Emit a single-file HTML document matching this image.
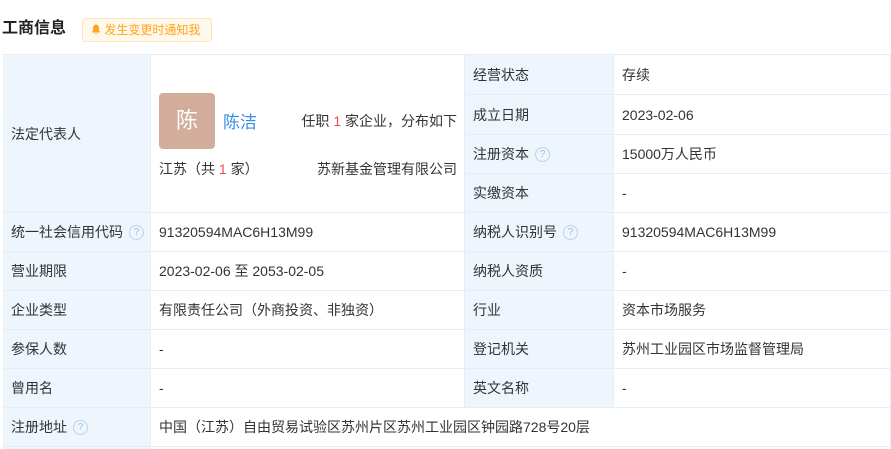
<!DOCTYPE html>
<html><head><meta charset="utf-8"><style>
*{margin:0;padding:0;box-sizing:border-box}
html,body{width:891px;height:449px;overflow:hidden}
body{background:#fff;font-family:"Liberation Sans","Noto Sans CJK SC",sans-serif;color:#333;font-size:14px;position:relative}
.c{position:absolute;border-right:1px solid #e4eef6;border-bottom:1px solid #e4eef6;display:flex;align-items:center;padding-left:8px;white-space:nowrap}
.l{background:#eef5fd;color:#333}
.q{display:inline-block;width:15px;height:15px;border:1px solid #b9d2ea;border-radius:50%;color:#9bbde0;font-size:10px;line-height:13px;text-align:center;margin-left:6px}
</style></head><body>
<div style="position:absolute;left:2px;top:18px;font-size:16px;font-weight:bold;color:#222;line-height:22px">工商信息</div>
<div style="position:absolute;left:82px;top:18px;width:130px;height:24px;background:#fff8ec;border:1px solid #ffe4b5;border-radius:3px;color:#ffa41c;font-size:12px;line-height:22px;padding-left:8px">
<svg width="10" height="11" viewBox="0 0 10 11" style="vertical-align:-1px"><path d="M5 0.5C2.8 0.5 2 2.5 2 4V6.5L0.8 8.5H9.2L8 6.5V4C8 2.5 7.2 0.5 5 0.5Z M3.8 9.3A1.2 1.2 0 0 0 6.2 9.3Z" fill="#ffa41c"/></svg> 发生变更时通知我</div>
<div style="position:absolute;left:3px;top:54px;width:888px;border-top:1px solid #e4eef6"></div>
<div style="position:absolute;left:3px;top:54px;height:395px;border-left:1px solid #e4eef6"></div>

<div class="c l" style="left:3px;top:55px;width:148px;height:158px">法定代表人</div>
<div class="c" style="left:151px;top:55px;width:314px;height:158px;display:block;padding:0">
 <div style="position:absolute;left:8px;top:38px;width:56px;height:56px;background:#d2ad9c;border-radius:4px;color:#fff;font-size:22px;line-height:56px;text-align:center">陈</div>
 <div style="position:absolute;left:72px;top:53px;font-size:17px;color:#3a8ee6">陈洁</div>
 <div style="position:absolute;right:7px;top:56px">任职 <span style="color:#f04a4a">1</span> 家企业，分布如下</div>
 <div style="position:absolute;left:8px;top:104px">江苏（共 <span style="color:#f04a4a">1</span> 家）</div>
 <div style="position:absolute;right:7px;top:104px">苏新基金管理有限公司</div>
</div>

<div class="c l" style="left:465px;top:55px;width:149px;height:40px">经营状态</div>
<div class="c" style="left:614px;top:55px;width:277px;height:40px">存续</div>
<div class="c l" style="left:465px;top:95px;width:149px;height:40px">成立日期</div>
<div class="c" style="left:614px;top:95px;width:277px;height:40px">2023-02-06</div>
<div class="c l" style="left:465px;top:135px;width:149px;height:39px">注册资本<span class="q">?</span></div>
<div class="c" style="left:614px;top:135px;width:277px;height:39px">15000万人民币</div>
<div class="c l" style="left:465px;top:174px;width:149px;height:39px">实缴资本</div>
<div class="c" style="left:614px;top:174px;width:277px;height:39px">-</div>

<div class="c l" style="left:3px;top:213px;width:148px;height:39px">统一社会信用代码<span class="q">?</span></div>
<div class="c" style="left:151px;top:213px;width:314px;height:39px">91320594MAC6H13M99</div>
<div class="c l" style="left:465px;top:213px;width:149px;height:39px">纳税人识别号<span class="q">?</span></div>
<div class="c" style="left:614px;top:213px;width:277px;height:39px">91320594MAC6H13M99</div>

<div class="c l" style="left:3px;top:252px;width:148px;height:39px">营业期限</div>
<div class="c" style="left:151px;top:252px;width:314px;height:39px">2023-02-06 至 2053-02-05</div>
<div class="c l" style="left:465px;top:252px;width:149px;height:39px">纳税人资质</div>
<div class="c" style="left:614px;top:252px;width:277px;height:39px">-</div>

<div class="c l" style="left:3px;top:291px;width:148px;height:39px">企业类型</div>
<div class="c" style="left:151px;top:291px;width:314px;height:39px">有限责任公司（外商投资、非独资）</div>
<div class="c l" style="left:465px;top:291px;width:149px;height:39px">行业</div>
<div class="c" style="left:614px;top:291px;width:277px;height:39px">资本市场服务</div>

<div class="c l" style="left:3px;top:330px;width:148px;height:39px">参保人数</div>
<div class="c" style="left:151px;top:330px;width:314px;height:39px">-</div>
<div class="c l" style="left:465px;top:330px;width:149px;height:39px">登记机关</div>
<div class="c" style="left:614px;top:330px;width:277px;height:39px">苏州工业园区市场监督管理局</div>

<div class="c l" style="left:3px;top:369px;width:148px;height:39px">曾用名</div>
<div class="c" style="left:151px;top:369px;width:314px;height:39px">-</div>
<div class="c l" style="left:465px;top:369px;width:149px;height:39px">英文名称</div>
<div class="c" style="left:614px;top:369px;width:277px;height:39px">-</div>

<div class="c l" style="left:3px;top:408px;width:148px;height:39px">注册地址<span class="q">?</span></div>
<div class="c" style="left:151px;top:408px;width:740px;height:39px">中国（江苏）自由贸易试验区苏州片区苏州工业园区钟园路728号20层</div>
<div class="c l" style="left:3px;top:447px;width:148px;height:2px;border-bottom:0"></div>
</body></html>
